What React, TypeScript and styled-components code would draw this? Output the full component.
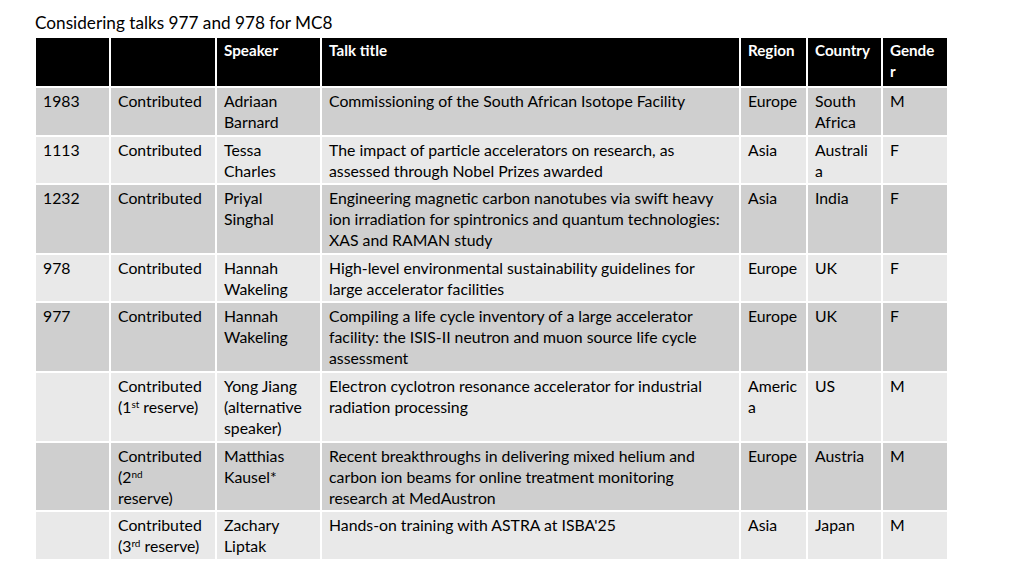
import styled, { createGlobalStyle } from "styled-components";

const GlobalStyle = createGlobalStyle`
  html, body {
    margin: 0;
    padding: 0;
    background: #ffffff;
  }
  body {
    font-family: Lato, "Open Sans", sans-serif;
    color: #000000;
  }
`;

type Cell = (string | JSX.Element)[];

interface Row {
  id: string;
  type: Cell;
  speaker: Cell;
  title: Cell;
  region: Cell;
  country: Cell;
  gender: string;
}

const rows: Row[] = [
  {
    id: "1983",
    type: ["Contributed"],
    speaker: ["Adriaan", "Barnard"],
    title: ["Commissioning of the South African Isotope Facility"],
    region: ["Europe"],
    country: ["South", "Africa"],
    gender: "M",
  },
  {
    id: "1113",
    type: ["Contributed"],
    speaker: ["Tessa", "Charles"],
    title: [
      "The impact of particle accelerators on research, as",
      "assessed through Nobel Prizes awarded",
    ],
    region: ["Asia"],
    country: ["Australi", "a"],
    gender: "F",
  },
  {
    id: "1232",
    type: ["Contributed"],
    speaker: ["Priyal", "Singhal"],
    title: [
      "Engineering magnetic carbon nanotubes via swift heavy",
      "ion irradiation for spintronics and quantum technologies:",
      "XAS and RAMAN study",
    ],
    region: ["Asia"],
    country: ["India"],
    gender: "F",
  },
  {
    id: "978",
    type: ["Contributed"],
    speaker: ["Hannah", "Wakeling"],
    title: [
      "High-level environmental sustainability guidelines for",
      "large accelerator facilities",
    ],
    region: ["Europe"],
    country: ["UK"],
    gender: "F",
  },
  {
    id: "977",
    type: ["Contributed"],
    speaker: ["Hannah", "Wakeling"],
    title: [
      "Compiling a life cycle inventory of a large accelerator",
      "facility: the ISIS-II neutron and muon source life cycle",
      "assessment",
    ],
    region: ["Europe"],
    country: ["UK"],
    gender: "F",
  },
  {
    id: "",
    type: [
      "Contributed",
      <span key="r1">
        (1<sup>st</sup> reserve)
      </span>,
    ],
    speaker: ["Yong Jiang", "(alternative", "speaker)"],
    title: [
      "Electron cyclotron resonance accelerator for industrial",
      "radiation processing",
    ],
    region: ["Americ", "a"],
    country: ["US"],
    gender: "M",
  },
  {
    id: "",
    type: [
      "Contributed",
      <span key="r2">
        (2<sup>nd</sup>
      </span>,
      "reserve)",
    ],
    speaker: ["Matthias", "Kausel*"],
    title: [
      "Recent breakthroughs in delivering mixed helium and",
      "carbon ion beams for online treatment monitoring",
      "research at MedAustron",
    ],
    region: ["Europe"],
    country: ["Austria"],
    gender: "M",
  },
  {
    id: "",
    type: [
      "Contributed",
      <span key="r3">
        (3<sup>rd</sup> reserve)
      </span>,
    ],
    speaker: ["Zachary", "Liptak"],
    title: ["Hands-on training with ASTRA at ISBA'25"],
    region: ["Asia"],
    country: ["Japan"],
    gender: "M",
  },
];

const Lines = ({ lines }: { lines: Cell }) => (
  <>
    {lines.map((l, i) => (
      <Line key={i}>{l}</Line>
    ))}
  </>
);

export default function App() {
  return (
    <>
      <GlobalStyle />
      <Page>
        <Heading>Considering talks 977 and 978 for MC8</Heading>
        <Table>
          <colgroup>
            <col style={{ width: 75 }} />
            <col style={{ width: 106 }} />
            <col style={{ width: 105 }} />
            <col style={{ width: 419 }} />
            <col style={{ width: 67 }} />
            <col style={{ width: 75 }} />
            <col style={{ width: 66 }} />
          </colgroup>
          <thead>
            <tr>
              <Th />
              <Th />
              <Th>Speaker</Th>
              <Th>Talk title</Th>
              <Th>Region</Th>
              <Th>Country</Th>
              <Th>
                <Line>Gende</Line>
                <Line>r</Line>
              </Th>
            </tr>
          </thead>
          <tbody>
            {rows.map((r, i) => (
              <Tr key={i} $dark={i % 2 === 0}>
                <Td>{r.id}</Td>
                <Td>
                  <Lines lines={r.type} />
                </Td>
                <Td>
                  <Lines lines={r.speaker} />
                </Td>
                <Td>
                  <Lines lines={r.title} />
                </Td>
                <Td>
                  <Lines lines={r.region} />
                </Td>
                <Td>
                  <Lines lines={r.country} />
                </Td>
                <Td>{r.gender}</Td>
              </Tr>
            ))}
          </tbody>
        </Table>
      </Page>
    </>
  );
}

const Page = styled.div`
  padding: 11px 0 0 34px;
`;

const Heading = styled.h1`
  margin: 0 0 2px 1px;
  font-size: 17.2px;
  font-weight: 400;
  line-height: 23px;
`;

const Table = styled.table`
  border-collapse: collapse;
  table-layout: fixed;
  width: 915px;
  font-size: 15.8px;
  line-height: 21px;
`;

const Th = styled.th`
  background: #000000;
  color: #ffffff;
  font-weight: 700;
  font-size: 15.2px;
  text-align: left;
  vertical-align: top;
  padding: 2px 7px 4px 7px;
  height: 42px;
  border: 2px solid #ffffff;
`;

const Tr = styled.tr<{ $dark: boolean }>`
  background: ${(p) => (p.$dark ? "#cfcfcf" : "#e9e9e9")};
`;

const Td = styled.td`
  vertical-align: top;
  text-align: left;
  padding: 2px 7px 2.6px 7px;
  border: 2px solid #ffffff;
  white-space: nowrap;
  overflow: hidden;

  sup {
    font-size: 10px;
    line-height: 0;
    vertical-align: 5px;
  }
`;

const Line = styled.div`
  white-space: nowrap;
`;
